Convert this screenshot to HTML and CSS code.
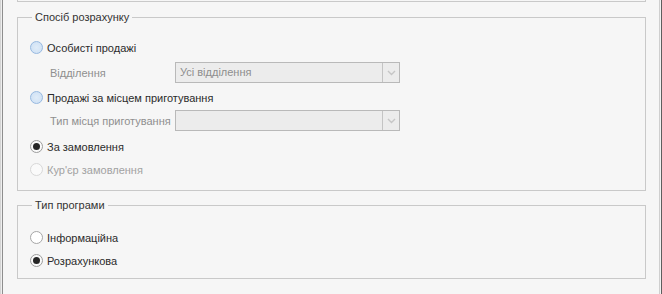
FILE: index.html
```html
<!DOCTYPE html>
<html lang="uk">
<head>
<meta charset="utf-8">
<title>Спосіб розрахунку</title>
<link rel="stylesheet" href="styles.css">
</head>
<body>
<div class="window">
  <div class="edge-left"></div>
  <div class="content">
    <div class="top-box"></div>

    <fieldset class="group group-calc">
      <legend class="group-title">Спосіб розрахунку</legend>
      <div class="radio-row first">
        <span class="radio radio-blue"></span>
        <span class="radio-label">Особисті продажі</span>
      </div>
      <div class="sub-row sub-1">
        <span class="sub-label">Відділення</span>
        <div class="combo">
          <span class="combo-text">Усі відділення</span>
          <span class="combo-btn">
            <svg width="9" height="6" viewBox="0 0 9 6"><path d="M1 1 L4.5 4.5 L8 1" fill="none" stroke="#c6c6c6" stroke-width="1.4"/></svg>
          </span>
        </div>
      </div>
      <div class="radio-row r2">
        <span class="radio radio-blue"></span>
        <span class="radio-label">Продажі за місцем приготування</span>
      </div>
      <div class="sub-row sub-2">
        <span class="sub-label">Тип місця приготування</span>
        <div class="combo">
          <span class="combo-text"></span>
          <span class="combo-btn">
            <svg width="9" height="6" viewBox="0 0 9 6"><path d="M1 1 L4.5 4.5 L8 1" fill="none" stroke="#c6c6c6" stroke-width="1.4"/></svg>
          </span>
        </div>
      </div>
      <div class="radio-row r3">
        <span class="radio radio-checked"></span>
        <span class="radio-label">За замовлення</span>
      </div>
      <div class="radio-row">
        <span class="radio radio-disabled"></span>
        <span class="radio-label disabled">Кур'єр замовлення</span>
      </div>
    </fieldset>

    <fieldset class="group group-type">
      <legend class="group-title">Тип програми</legend>
      <div class="radio-row first">
        <span class="radio radio-plain"></span>
        <span class="radio-label">Інформаційна</span>
      </div>
      <div class="radio-row">
        <span class="radio radio-checked"></span>
        <span class="radio-label">Розрахункова</span>
      </div>
    </fieldset>
  </div>
  <div class="edge-right"></div>
</div>
</body>
</html>
```
FILE: styles.css
```css
* { box-sizing: border-box; }

html, body {
  margin: 0;
  padding: 0;
  background: #f6f6f6;
}

body {
  font-family: "Liberation Sans", Arial, sans-serif;
  font-size: 11px;
  color: #2b2b2b;
}

.window {
  display: flex;
  width: 662px;
  height: 294px;
  background: #f6f6f6;
  overflow: hidden;
}

.edge-left {
  width: 3px;
  flex: none;
  background: linear-gradient(to right, #d4d4d4 0 1px, #efefef 1px 2px, #8e8e8e 2px 3px);
}

.edge-right {
  width: 3px;
  flex: none;
  background: linear-gradient(to right, #cfcfcf 0 1px, #f2f2f2 1px 2px, #5e5e5e 2px 3px);
}

.content {
  flex: 1;
  padding: 0 13px 0 14px;
  display: flex;
  flex-direction: column;
}

.top-box {
  height: 2px;
  border: 1px solid #c9c9c9;
  border-top: none;
}

.group {
  margin: 8px 0 0 0;
  border: 1px solid #c9c9c9;
  min-width: 0;
  display: flex;
  flex-direction: column;
}

.group-calc {
  padding: 11px 0 9px 12px;
}

.group-type {
  margin-top: 7px;
  padding: 13px 0 6px 12px;
}

.group-title {
  margin-left: 2px;
  padding: 0 3px;
  line-height: 15px;
  height: 15px;
  color: #333;
}

.radio-row {
  display: flex;
  align-items: center;
  height: 23px;
}

.radio-row.r2 { margin-top: 3px; }
.radio-row.r3 { margin-top: 4px; }

.radio {
  width: 13px;
  height: 13px;
  border-radius: 50%;
  flex: none;
  display: flex;
  align-items: center;
  justify-content: center;
  margin-right: 4px;
}

.radio-blue {
  border: 1px solid #97b9e0;
  background: radial-gradient(circle at 50% 50%, #e0ecf8 0, #d2e3f5 70%);
}

.radio-plain {
  border: 1px solid #a6a6a6;
  background: #ffffff;
}

.radio-checked {
  border: 1px solid #9c9c9c;
  background: #fafafa;
}

.radio-checked::after {
  content: "";
  width: 7px;
  height: 7px;
  border-radius: 50%;
  background: #262626;
}

.radio-disabled {
  border: 1px solid #d8d8d8;
  background: #fafafa;
}

.radio-label {
  white-space: nowrap;
}

.radio-label.disabled {
  color: #a2a2a2;
}

.sub-row {
  display: flex;
  align-items: center;
  height: 21px;
  padding-left: 20px;
}

.sub-1 { margin-top: 3px; }
.sub-2 { margin-top: 1px; }

.sub-label {
  width: 125px;
  flex: none;
  color: #8f8f8f;
  white-space: nowrap;
}

.combo {
  width: 225px;
  height: 21px;
  border: 1px solid #b9b9b9;
  background: #ececec;
  display: flex;
  align-items: stretch;
}

.combo-text {
  flex: 1;
  padding-left: 4px;
  line-height: 19px;
  color: #8e8e8e;
}

.combo-btn {
  width: 17px;
  flex: none;
  border-left: 1px solid #c4c4c4;
  display: flex;
  align-items: center;
  justify-content: center;
}
```
